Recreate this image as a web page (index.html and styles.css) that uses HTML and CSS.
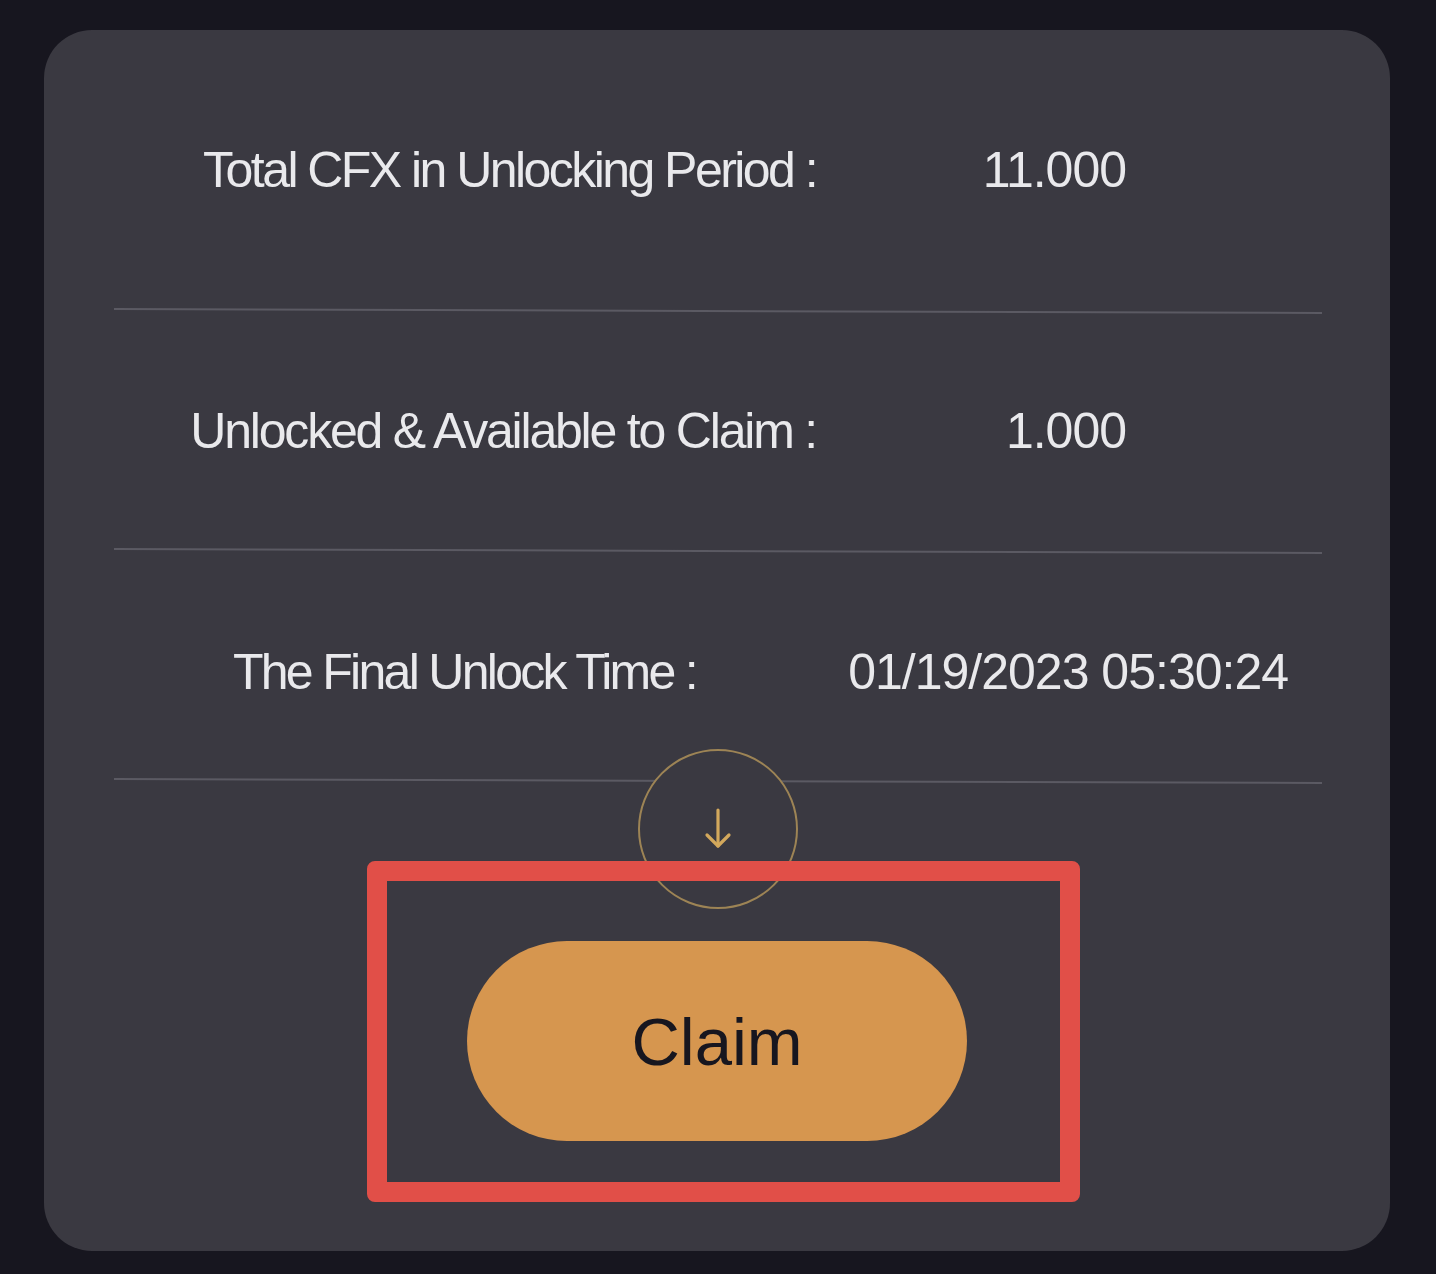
FILE: index.html
```html
<!DOCTYPE html>
<html lang="en">
<head>
<meta charset="utf-8">
<title>Claim</title>
<link rel="stylesheet" href="styles.css">
</head>
<body>
<div class="page">
  <section class="card">
    <div class="row row-first">
      <div class="label label-wide label-tight">Total CFX in Unlocking Period :</div>
      <div class="value value-narrow">11.000</div>
    </div>
    <div class="divider"></div>
    <div class="row row-second">
      <div class="label label-wide label-loose">Unlocked &amp; Available to Claim :</div>
      <div class="value value-narrow">1.000</div>
    </div>
    <div class="divider"></div>
    <div class="row row-third">
      <div class="label label-short">The Final Unlock Time :</div>
      <div class="value value-wide">01/19/2023 05:30:24</div>
    </div>
    <div class="divider"></div>
    <div class="arrow-circle">
      <svg class="arrow" width="30" height="44" viewBox="0 0 30 44" fill="none">
        <path d="M15 3 V39" stroke="currentColor" stroke-width="3.2" stroke-linecap="round"/>
        <path d="M4 28 L15 39 L26 28" stroke="currentColor" stroke-width="3.2" stroke-linecap="round" stroke-linejoin="round"/>
      </svg>
    </div>
    <button class="claim-btn" type="button">Claim</button>
  </section>
  <div class="highlight"></div>
</div>
</body>
</html>
```

FILE: styles.css
```css
* { box-sizing: border-box; }

html, body {
  margin: 0;
  padding: 0;
  background: #17161f;
}

body {
  width: 1436px;
  height: 1274px;
  overflow: hidden;
  font-family: "Liberation Sans", Arial, sans-serif;
}

.page {
  position: relative;
  padding: 30px 46px 0 44px;
}

.card {
  background: #3a3941;
  border-radius: 48px;
  height: 1221px;
  padding: 0 68px 0 70px;
  display: flex;
  flex-direction: column;
  align-items: stretch;
}

.row {
  display: flex;
  align-items: center;
  color: #e9e9ec;
  font-size: 50px;
  line-height: 50px;
}

.row-first { height: 280px; }
.row-second { height: 238px; }
.row-third { height: 228px; padding-top: 12px; }

.label {
  text-align: right;
  letter-spacing: -2.4px;
  white-space: nowrap;
  padding-right: 2px;
}

.label-tight { letter-spacing: -2.55px; }
.label-loose { letter-spacing: -2.2px; }

.label-wide { width: 704px; }
.label-short { width: 584px; letter-spacing: -2.7px; }

.value {
  text-align: right;
  letter-spacing: -1px;
  white-space: nowrap;
}

.value-narrow { width: 308px; }
.value-wide { width: 590px; }

.divider {
  height: 2px;
  background: #5b5a63;
  transform: rotate(0.19deg);
}

.arrow-circle {
  align-self: center;
  width: 160px;
  height: 160px;
  margin-top: -33px;
  border: 2px solid #9d8455;
  border-radius: 50%;
  background: #3a3941;
  display: flex;
  align-items: center;
  justify-content: center;
  position: relative;
  z-index: 1;
  color: #d2a85c;
}

.arrow {
  display: block;
}

.claim-btn {
  align-self: center;
  margin-top: 32px;
  width: 500px;
  height: 200px;
  border: none;
  border-radius: 100px;
  background: #d6964f;
  color: #17161f;
  font-family: "Liberation Sans", Arial, sans-serif;
  font-size: 67px;
  line-height: 1;
  padding: 0;
  margin-left: -2px;
  cursor: pointer;
}

.highlight {
  position: absolute;
  left: 367px;
  top: 861px;
  width: 713px;
  height: 341px;
  border: 20px solid #e14f48;
  border-radius: 8px;
  z-index: 2;
  pointer-events: none;
}
```
